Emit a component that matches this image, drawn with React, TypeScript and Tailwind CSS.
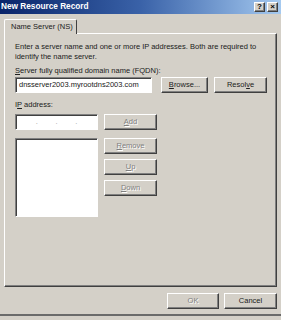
const raised =
  "border border-t-white border-l-white border-r-[#404040] border-b-[#404040] shadow-[inset_-1px_-1px_0_#808080] bg-[#d4d0c8]";
const sunken =
  "border border-t-[#808080] border-l-[#808080] border-b-white border-r-white shadow-[inset_1px_1px_0_#404040] bg-white";
const disabledText = "text-[#808080] [text-shadow:1px_1px_0_#fff]";

function Btn({
  label,
  accel,
  width,
  disabled,
}: {
  label: string;
  accel?: number;
  width: string;
  disabled?: boolean;
}) {
  const parts =
    accel === undefined ? (
      label
    ) : (
      <>
        {label.slice(0, accel)}
        <span className="underline underline-offset-1">{label[accel]}</span>
        {label.slice(accel + 1)}
      </>
    );
  return (
    <div
      className={`${raised} ${width} h-[16px] flex items-center justify-center ${
        disabled ? disabledText : "text-[#202020]"
      }`}
    >
      {parts}
    </div>
  );
}

export default function App() {
  return (
    <div
      className="w-[281px] h-[320px] bg-[#d4d0c8] text-[7.5px] leading-[10px] text-[#202020] overflow-hidden flex flex-col"
      style={{ fontFamily: '"Liberation Sans", Arial, sans-serif' }}
    >
      {/* title bar */}
      <div className="h-[14px] shrink-0 bg-gradient-to-r from-[#0a246a] via-[#3a62a8] to-[#a6caf0] flex items-center justify-between pl-[1px] pr-[3px]">
        <span className="text-white font-bold text-[8.25px]">New Resource Record</span>
        <div className="flex gap-[2px]">
          <div className={`${raised} w-[11px] h-[10px] flex items-center justify-center text-[8px] font-bold text-black leading-none`}>
            ?
          </div>
          <div className={`${raised} w-[11px] h-[10px] flex items-center justify-center text-[8px] font-bold text-black leading-none`}>
            ×
          </div>
        </div>
      </div>

      <div className="px-[4px] pt-[5px] flex flex-col">
        {/* tab */}
        <div className="relative -mb-px z-10 w-[73px] h-[15px] bg-[#d4d0c8] border-t border-l border-r border-t-white border-l-white border-r-[#404040] rounded-t-[2px] flex items-center pl-[6px] whitespace-nowrap">
          Name Server (NS)
        </div>

        {/* panel */}
        <div className="h-[254px] border border-t-white border-l-white border-r-[#404040] border-b-[#404040] shadow-[inset_-1px_-1px_0_#808080] pl-[10px] pt-[8px] flex flex-col">
          <p>
            Enter a server name and one or more IP addresses. Both are required to
            <br />
            identify the name server.
          </p>

          <div className="mt-[4px]">
            <span className="underline underline-offset-1">S</span>erver fully qualified domain name (FQDN):
          </div>
          <div className="mt-[1px] flex items-center">
            <div className={`${sunken} w-[137px] h-[16px] flex items-center pl-[3px] text-[#202020]`}>
              dnsserver2003.myrootdns2003.com
            </div>
            <div className="ml-[9px]">
              <Btn label="Browse..." accel={0} width="w-[47px]" />
            </div>
            <div className="ml-[6px]">
              <Btn label="Resolve" accel={5} width="w-[53px]" />
            </div>
          </div>

          <div className="mt-[7px]">
            I<span className="underline underline-offset-1">P</span> address:
          </div>

          <div className="mt-[4px] flex gap-[6px]">
            <div className="flex flex-col gap-[8px]">
              <div className={`${sunken} w-[83px] h-[16px] flex items-center px-[2px] text-[#a0a0a0]`}>
                <span className="flex-1" />
                <span>.</span>
                <span className="flex-1" />
                <span>.</span>
                <span className="flex-1" />
                <span>.</span>
                <span className="flex-1" />
              </div>
              <div className={`${sunken} w-[83px] h-[79px]`} />
            </div>
            <div className="flex flex-col">
              <Btn label="Add" accel={0} width="w-[53px]" disabled />
              <div className="mt-[8px]">
                <Btn label="Remove" accel={0} width="w-[53px]" disabled />
              </div>
              <div className="mt-[5px]">
                <Btn label="Up" accel={0} width="w-[53px]" disabled />
              </div>
              <div className="mt-[5px]">
                <Btn label="Down" accel={0} width="w-[53px]" disabled />
              </div>
            </div>
          </div>
        </div>
      </div>

      {/* bottom buttons */}
      <div className="flex justify-end gap-[5px] pr-[4px] pt-[6px]">
        <Btn label="OK" width="w-[52px]" disabled />
        <Btn label="Cancel" width="w-[53px]" />
      </div>
      <div className="mt-[5px] h-[2px] bg-[#6a6a6a] shrink-0" />
    </div>
  );
}
